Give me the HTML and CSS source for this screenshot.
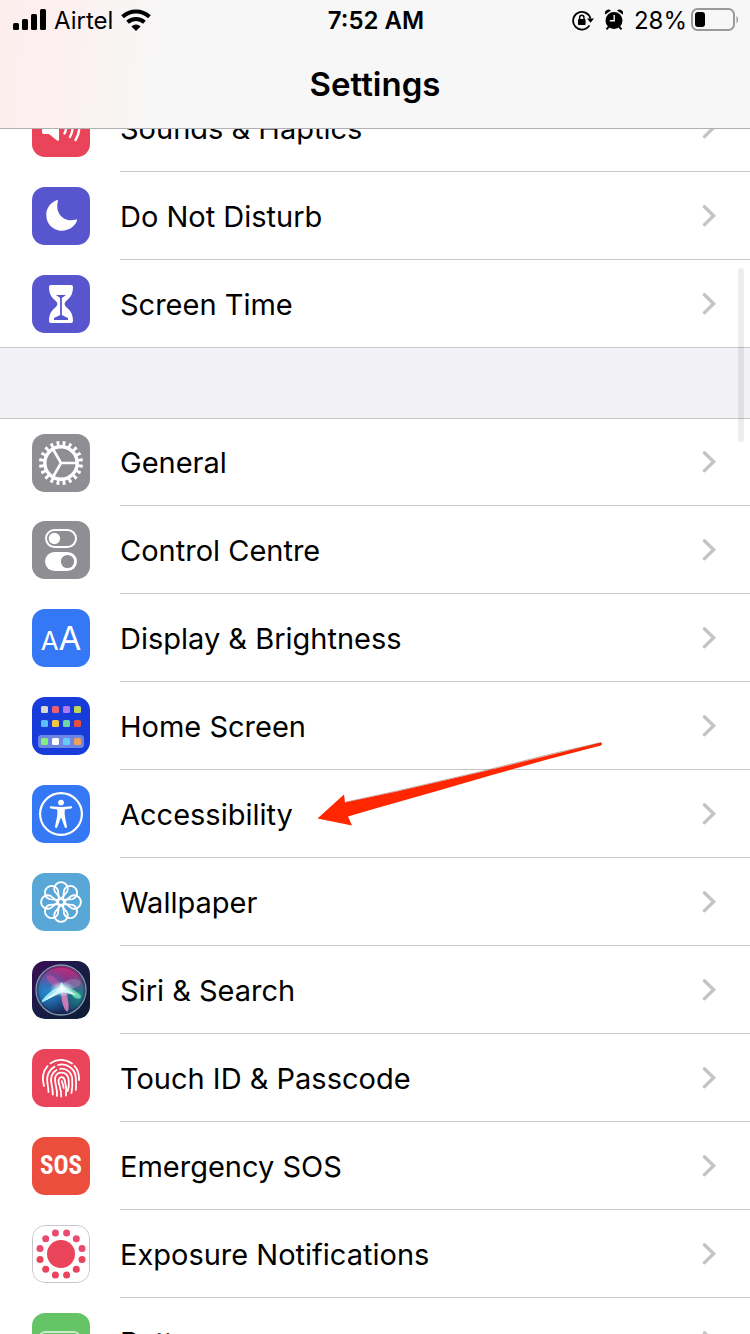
FILE: index.html
```html
<!DOCTYPE html>
<html lang="en">
<head>
    <meta charset="UTF-8">
    <meta name="viewport" content="width=device-width, initial-scale=1.0">
    <title>Settings</title>
    <link rel="stylesheet" href="styles.css">
</head>
<body>
    <!-- Shared shapes -->
    <svg class="defs" width="0" height="0" aria-hidden="true">
        <symbol id="chevron" viewBox="0 0 14 22">
            <path d="M2.5 1.8L11.6 10.7L2.5 19.6" fill="none" stroke="#c4c4c7" stroke-width="3.4" stroke-linecap="round" stroke-linejoin="miter"/>
        </symbol>
        <path id="petal" d="M29 26L23 18.8A6.7 6.7 0 1 1 35 18.8Z"/>
        <g id="dots">
            <circle cx="34.6" cy="8" r="3.5"/>
            <circle cx="44.3" cy="13.7" r="3.5"/>
            <circle cx="50" cy="23.4" r="3.5"/>
        </g>
    </svg>

    <div class="screen">
        <header class="header">
            <div class="status-bar">
                <div class="status-left">
                    <svg width="33" height="22" viewBox="0 0 33 22" aria-hidden="true">
                        <rect x="0" y="14" width="6" height="7" rx="1.5"/>
                        <rect x="9" y="10" width="6" height="11" rx="1.5"/>
                        <rect x="18" y="5" width="6" height="16" rx="1.5"/>
                        <rect x="27" y="0" width="6" height="21" rx="1.5"/>
                    </svg>
                    <span class="status-text">Airtel</span>
                    <svg width="30" height="22" viewBox="0 0 30 22" aria-hidden="true">
                        <g fill="none" stroke="#000" stroke-width="4">
                            <path d="M1.6 7.8A19.5 19.5 0 0 1 28.4 7.8"/>
                            <path d="M6.6 13.2A12.5 12.5 0 0 1 23.4 13.2"/>
                        </g>
                        <path d="M10.4 17.4A6.8 6.8 0 0 1 19.6 17.4L15 22Z"/>
                    </svg>
                </div>
                <div class="status-text status-time">7:52 AM</div>
                <div class="status-right">
                    <svg width="22" height="22" viewBox="0 0 22 22" aria-hidden="true">
                        <path d="M17.4 16.4A8.8 8.8 0 1 1 18.4 9.5" fill="none" stroke="#000" stroke-width="1.8"/>
                        <path d="M15 9.5H22L18.5 13.8Z"/>
                        <rect x="6" y="10" width="7.600" height="6" rx="0.800"/>
                        <path d="M7.600 10.500V8.800A2.200 2.600 0 0 1 12 8.800V10.500" fill="none" stroke="#000" stroke-width="1.400"/>
                    </svg>
                    <svg width="18" height="22" viewBox="0 0 18 22" aria-hidden="true">
                        <circle cx="9" cy="11.500" r="8.500"/>
                        <path d="M0.300 5.500A3.500 3.500 0 0 1 6 1.600ZM17.700 5.500A3.500 3.500 0 0 0 12 1.600Z"/>
                        <path d="M4 17.500L1.500 20.300M14 17.500L16.500 20.300" stroke="#000" stroke-width="2"/>
                        <path d="M9.200 6V11.800H4.800" fill="none" stroke="#f7f7f7" stroke-width="1.400"/>
                    </svg>
                    <span class="status-text">28%</span>
                    <svg class="battery" width="48" height="24" viewBox="0 0 48 24" aria-hidden="true">
                        <rect x="1" y="1" width="42" height="21" rx="5.500" fill="none" stroke="#999" stroke-width="2"/>
                        <rect x="4" y="4" width="10" height="15" rx="3"/>
                        <path d="M45.500 7.500Q48.500 11.500 45.500 15.500Z" fill="#999"/>
                    </svg>
                </div>
            </div>
            <h1 class="title">Settings</h1>
        </header>

        <main class="content">
            <ul class="group group-first">
                <li>
                    <a class="row" href="#">
                        <svg class="icon red" viewBox="0 0 58 58" aria-hidden="true">
                            <path d="M12 22h5l8-6.500q2-1.300 2 1v24q0 2-2 1L17 35h-5q-2 0-2-2v-9q0-2 2-2z" fill="#fff"/>
                            <g fill="none" stroke="#fff" stroke-width="2.400" stroke-linecap="round">
                                <path d="M32.500 23.500Q35.500 29 32.500 34.500"/>
                                <path d="M38 20Q43 29 38 38"/>
                                <path d="M43.500 17Q51 29 43.500 41"/>
                            </g>
                        </svg>
                        <span class="row-body">
                            <span class="label">Sounds &amp; Haptics</span>
                            <svg class="chevron" aria-hidden="true"><use href="#chevron"/></svg>
                        </span>
                    </a>
                </li>
                <li>
                    <a class="row" href="#">
                        <svg class="icon purple" viewBox="0 0 58 58" aria-hidden="true">
                            <path d="M24.500 13.200C17.500 16 14.300 22 14.300 28C14.300 37 21 43.700 30 43.700C37 43.700 43 39.500 45 33.600C45.300 32.700 44.800 32.300 44 32.600C33 35.500 22.600 28 25.900 14C26 13.200 25.300 12.900 24.500 13.200Z" fill="#fff"/>
                        </svg>
                        <span class="row-body">
                            <span class="label">Do Not Disturb</span>
                            <svg class="chevron" aria-hidden="true"><use href="#chevron"/></svg>
                        </span>
                    </a>
                </li>
                <li>
                    <a class="row" href="#">
                        <svg class="icon purple" viewBox="0 0 58 58" aria-hidden="true">
                            <path d="M19 10H39Q41 10 41 12C41 22 36 23.500 33 27.500Q32.200 29 33 30.500C36 34.500 41 36 41 46Q41 48 39 48H19Q17 48 17 46C17 36 22 34.500 25 30.500Q25.800 29 25 27.500C22 23.500 17 22 17 12Q17 10 19 10Z" fill="#fff"/>
                            <path d="M24 20H34L29.900 23V40L36 43V45H22V43L28.100 40V23Z" fill="#5856ce"/>
                        </svg>
                        <span class="row-body">
                            <span class="label">Screen Time</span>
                            <svg class="chevron" aria-hidden="true"><use href="#chevron"/></svg>
                        </span>
                    </a>
                </li>
            </ul>

            <ul class="group">
                <li>
                    <a class="row" href="#">
                        <svg class="icon gray" viewBox="0 0 58 58" aria-hidden="true">
                            <g fill="none" stroke="#fff">
                                <circle cx="29" cy="29" r="16.200" stroke-width="3.400"/>
                                <circle cx="29" cy="29" r="19.500" stroke-width="5" pathLength="200" stroke-dasharray="4.600 5.400" stroke-dashoffset="-2.700"/>
                                <path d="M29 29H44M29 29L21.500 16M29 29L21.500 42" stroke-width="2.600"/>
                            </g>
                        </svg>
                        <span class="row-body">
                            <span class="label">General</span>
                            <svg class="chevron" aria-hidden="true"><use href="#chevron"/></svg>
                        </span>
                    </a>
                </li>
                <li>
                    <a class="row" href="#">
                        <svg class="icon gray" viewBox="0 0 58 58" aria-hidden="true">
                            <rect x="14" y="9" width="30" height="17" rx="8.500" fill="none" stroke="#fff" stroke-width="2"/>
                            <circle cx="22.400" cy="17.500" r="5.700" fill="#fff"/>
                            <rect x="13" y="31" width="32" height="19" rx="9.500" fill="#fff"/>
                            <circle cx="35.500" cy="40.500" r="6.600" fill="#8e8e93"/>
                        </svg>
                        <span class="row-body">
                            <span class="label">Control Centre</span>
                            <svg class="chevron" aria-hidden="true"><use href="#chevron"/></svg>
                        </span>
                    </a>
                </li>
                <li>
                    <a class="row" href="#">
                        <span class="icon blue text-icon" aria-hidden="true"><span class="small-a">A</span><span class="big-a">A</span></span>
                        <span class="row-body">
                            <span class="label">Display &amp; Brightness</span>
                            <svg class="chevron" aria-hidden="true"><use href="#chevron"/></svg>
                        </span>
                    </a>
                </li>
                <li>
                    <a class="row" href="#">
                        <svg class="icon navy" viewBox="0 0 58 58" aria-hidden="true">
                            <rect x="6" y="38" width="46" height="13" rx="3.500" fill="#6d86e4"/>
                            <rect x="9" y="9" width="7" height="7" rx="1.500" fill="#d8d8d0"/>
                            <rect x="20" y="9" width="7" height="7" rx="1.500" fill="#ee5f6b"/>
                            <rect x="31" y="9" width="7" height="7" rx="1.500" fill="#ad7af2"/>
                            <rect x="42" y="9" width="7" height="7" rx="1.500" fill="#bcd751"/>
                            <rect x="9" y="23" width="7" height="7" rx="1.500" fill="#5abdf8"/>
                            <rect x="20" y="23" width="7" height="7" rx="1.500" fill="#f5c443"/>
                            <rect x="31" y="23" width="7" height="7" rx="1.500" fill="#6fd3a6"/>
                            <rect x="42" y="23" width="7" height="7" rx="1.500" fill="#e84d3d"/>
                            <rect x="9" y="41" width="7" height="7" rx="1.500" fill="#83ee7c"/>
                            <rect x="20" y="41" width="7" height="7" rx="1.500" fill="#fff"/>
                            <rect x="31" y="41" width="7" height="7" rx="1.500" fill="#62cbf8"/>
                            <rect x="42" y="41" width="7" height="7" rx="1.500" fill="#f0a05a"/>
                        </svg>
                        <span class="row-body">
                            <span class="label">Home Screen</span>
                            <svg class="chevron" aria-hidden="true"><use href="#chevron"/></svg>
                        </span>
                    </a>
                </li>
                <li class="pointed">
                    <a class="row" href="#">
                        <svg class="icon blue" viewBox="0 0 58 58" aria-hidden="true">
                            <circle cx="29" cy="29" r="20.900" fill="none" stroke="#fff" stroke-width="2.200"/>
                            <circle cx="29" cy="17.600" r="2.900" fill="#fff"/>
                            <path d="M19 21.200Q29 22.600 39 21.200Q40.300 21.200 40.200 22.400Q40.100 23.200 39 23.400L32.800 24.400Q32.300 28 33 32L35 41.500Q35 43 33.800 43Q33 43 32.600 42L29.600 33.500Q29 32.700 28.400 33.500L25.400 42Q25 43 24.200 43Q23 43 23 41.500L25 32Q25.700 28 25.200 24.400L19 23.400Q17.900 23.200 17.800 22.400Q17.700 21.200 19 21.200Z" fill="#fff"/>
                        </svg>
                        <span class="row-body">
                            <span class="label">Accessibility</span>
                            <svg class="chevron" aria-hidden="true"><use href="#chevron"/></svg>
                        </span>
                    </a>
                    <svg class="arrow" width="286" height="86" viewBox="0 0 286 86" aria-hidden="true">
                        <path d="M0.500 76.500L27 52.500L28 60.500L80 49.500L160 31L284 0.500Q286 2 284 3.500L232 17L175 33L120 49L60 66L31 74.500L35 83.500Z" fill="#ff2600"/>
                        <path d="M29 60L80 49L160 30.500L232 12.500L284 0.500" fill="none" stroke="#8a3a35" stroke-width="1" opacity="0.450"/>
                    </svg>
                </li>
                <li>
                    <a class="row" href="#">
                        <svg class="icon sky" viewBox="0 0 58 58" aria-hidden="true">
                            <g fill="none" stroke="#fff" stroke-width="1.800">
                                <use href="#petal"/>
                                <use href="#petal" transform="rotate(45 29 29)"/>
                                <use href="#petal" transform="rotate(90 29 29)"/>
                                <use href="#petal" transform="rotate(135 29 29)"/>
                                <use href="#petal" transform="rotate(180 29 29)"/>
                                <use href="#petal" transform="rotate(225 29 29)"/>
                                <use href="#petal" transform="rotate(270 29 29)"/>
                                <use href="#petal" transform="rotate(315 29 29)"/>
                                <circle cx="29" cy="29" r="3.200"/>
                            </g>
                        </svg>
                        <span class="row-body">
                            <span class="label">Wallpaper</span>
                            <svg class="chevron" aria-hidden="true"><use href="#chevron"/></svg>
                        </span>
                    </a>
                </li>
                <li>
                    <a class="row" href="#">
                        <svg class="icon" viewBox="0 0 58 58" aria-hidden="true">
                            <defs>
                                <linearGradient id="siriBack" x1="0" y1="0" x2="1" y2="1">
                                    <stop offset="0" stop-color="#3c0c55"/>
                                    <stop offset="0.450" stop-color="#1b1c48"/>
                                    <stop offset="1" stop-color="#0c1d33"/>
                                </linearGradient>
                                <linearGradient id="siriBall" x1="0.600" y1="0" x2="0.400" y2="1">
                                    <stop offset="0" stop-color="#c02c7c"/>
                                    <stop offset="0.400" stop-color="#6f3a8c"/>
                                    <stop offset="0.600" stop-color="#204c83"/>
                                    <stop offset="1" stop-color="#152451"/>
                                </linearGradient>
                                <radialGradient id="siriBlue" cx="0.200" cy="0.550" r="0.500">
                                    <stop offset="0" stop-color="#288fd8" stop-opacity="0.900"/>
                                    <stop offset="1" stop-color="#288fd8" stop-opacity="0"/>
                                </radialGradient>
                                <radialGradient id="siriTeal" cx="0.900" cy="0.600" r="0.450">
                                    <stop offset="0" stop-color="#1d8d86" stop-opacity="0.900"/>
                                    <stop offset="1" stop-color="#1d8d86" stop-opacity="0"/>
                                </radialGradient>
                                <radialGradient id="siriGlow">
                                    <stop offset="0" stop-color="#fff"/>
                                    <stop offset="0.350" stop-color="#d8fcff" stop-opacity="0.800"/>
                                    <stop offset="1" stop-color="#8fe8f0" stop-opacity="0"/>
                                </radialGradient>
                            </defs>
                            <rect width="58" height="58" fill="url(#siriBack)"/>
                            <circle cx="29" cy="29" r="24" fill="url(#siriBall)"/>
                            <circle cx="29" cy="29" r="24" fill="url(#siriBlue)"/>
                            <circle cx="29" cy="29" r="24" fill="url(#siriTeal)"/>
                            <path d="M14 16Q19 11 27 21L31 30Q19 26 14 16Z" fill="#d44fa0" opacity="0.550"/>
                            <path d="M27 25Q39 14 48 20Q51 24 43 27L31 30Z" fill="#b58ac7" opacity="0.400"/>
                            <path d="M31 26Q44 28 49 35Q49 39 43 37Z" fill="#73ebb4" opacity="0.800"/>
                            <path d="M28 28L34 30Q38 45 36 51Q32 50 30 40Z" fill="#e783be" opacity="0.850"/>
                            <path d="M32 26Q20 37 9 42Q10 37 22 28Z" fill="#a6f4ff" opacity="0.900"/>
                            <path d="M29 21Q31 23 33 27L45 34Q37 33 31 31L12 40L27 28Z" fill="#fff" opacity="0.850"/>
                            <ellipse cx="30" cy="28" rx="13" ry="8" fill="url(#siriGlow)"/>
                            <circle cx="29" cy="29" r="25" fill="none" stroke="#8199ad" stroke-width="1.300"/>
                            <circle cx="29" cy="29" r="23" fill="none" stroke="#202650" stroke-width="1" opacity="0.500"/>
                        </svg>
                        <span class="row-body">
                            <span class="label">Siri &amp; Search</span>
                            <svg class="chevron" aria-hidden="true"><use href="#chevron"/></svg>
                        </span>
                    </a>
                </li>
                <li>
                    <a class="row" href="#">
                        <svg class="icon red" viewBox="0 0 58 58" aria-hidden="true">
                            <g fill="none" stroke="#fff" stroke-width="1.800" stroke-linecap="round">
                                <path d="M12 37Q8.500 25 15.500 17.200"/>
                                <path d="M18.500 14.200Q29 7.500 40 14.500"/>
                                <path d="M42.500 17Q47.600 22.500 47 31"/>
                                <path d="M16.500 43C16.500 36 13 30 16.800 23.500Q18.800 19.700 22.500 17.600"/>
                                <path d="M26 16C35 13.500 43.500 20 43.800 29Q44.500 35 43.800 41"/>
                                <path d="M20.800 45.500C21 36 17.500 33 19.600 27Q21 23 24.500 21"/>
                                <path d="M28 19.800C34.500 19 39.800 23.500 40.200 30Q40.800 37 39.500 44"/>
                                <path d="M25 47C25.600 37 21.500 33.500 23.300 28C25.500 22 34.500 22 36.500 29.500Q37.500 37 35.600 42"/>
                                <path d="M29.200 47.500C29.700 39 25.500 34 26.700 30.500C28 27 31.700 27.500 32.700 31Q35 39 34 46.500"/>
                                <path d="M29.800 32Q31.300 36 31.600 39"/>
                            </g>
                        </svg>
                        <span class="row-body">
                            <span class="label">Touch ID &amp; Passcode</span>
                            <svg class="chevron" aria-hidden="true"><use href="#chevron"/></svg>
                        </span>
                    </a>
                </li>
                <li>
                    <a class="row" href="#">
                        <span class="icon orange text-icon sos" aria-hidden="true">SOS</span>
                        <span class="row-body">
                            <span class="label">Emergency SOS</span>
                            <svg class="chevron" aria-hidden="true"><use href="#chevron"/></svg>
                        </span>
                    </a>
                </li>
                <li>
                    <a class="row" href="#">
                        <svg class="icon" viewBox="0 0 58 58" aria-hidden="true">
                            <rect x="0.500" y="0.500" width="57" height="57" rx="12.500" fill="#fff" stroke="#c8c8ca"/>
                            <g fill="#ea445a">
                                <circle cx="29" cy="29" r="14"/>
                                <use href="#dots" fill="#e94b70"/>
                                <use href="#dots" transform="rotate(90 29 29)"/>
                                <use href="#dots" transform="rotate(180 29 29)"/>
                                <use href="#dots" transform="rotate(270 29 29)" fill="#e94b70"/>
                            </g>
                        </svg>
                        <span class="row-body">
                            <span class="label">Exposure Notifications</span>
                            <svg class="chevron" aria-hidden="true"><use href="#chevron"/></svg>
                        </span>
                    </a>
                </li>
                <li>
                    <a class="row" href="#">
                        <svg class="icon green" viewBox="0 0 58 58" aria-hidden="true">
                            <rect x="8" y="19" width="39" height="21" rx="5" fill="none" stroke="#c9ebc9" stroke-width="2"/>
                            <rect x="11" y="22" width="33" height="15" rx="2" fill="#fff"/>
                            <path d="M49 26Q52 29.500 49 33Z" fill="#fff"/>
                        </svg>
                        <span class="row-body">
                            <span class="label">Battery</span>
                            <svg class="chevron" aria-hidden="true"><use href="#chevron"/></svg>
                        </span>
                    </a>
                </li>
            </ul>
            <div class="scroll-thumb"></div>
        </main>
    </div>
</body>
</html>
```

FILE: styles.css
```css
* {
    margin: 0;
    padding: 0;
    box-sizing: border-box;
}

body {
    font-family: Inter, Roboto, "Liberation Sans", sans-serif;
    background: #f2f1f6;
    color: #000;
}

.defs {
    position: absolute;
}

.screen {
    display: flex;
    flex-direction: column;
    height: 100vh;
    overflow: hidden;
}

/* Header */
.header {
    flex: none;
    background: linear-gradient(95deg, #fdeeee 0, #fdeff0 60px, #f9f4f4 120px, #f7f7f7 180px);
    border-bottom: 1px solid #b0b0b2;
}

.status-bar {
    display: grid;
    grid-template-columns: 1fr auto 1fr;
    align-items: center;
    height: 40px;
    padding: 0 11px 0 13px;
}

.status-left,
.status-right {
    display: flex;
    align-items: center;
}

.status-left {
    gap: 8px;
}

.status-right {
    justify-content: flex-end;
    gap: 11px;
}

.status-right .battery {
    margin-left: -7px;
}

.status-text {
    padding-top: 2px;
    font-size: 24px;
    line-height: 38px;
}

.status-time {
    font-weight: 600;
}

.title {
    height: 88px;
    font-size: 33px;
    font-weight: 600;
    line-height: 88px;
    text-align: center;
}

/* List */
.content {
    position: relative;
    flex: 1;
    min-height: 0;
    overflow: hidden;
}

.group {
    list-style: none;
    background: #fff;
    border-top: 1px solid #c6c6c8;
    border-bottom: 1px solid #c6c6c8;
    margin-bottom: 70px;
}

/* scrolled part of the way under the header */
.group-first {
    margin-top: -46px;
}

.row {
    display: flex;
    align-items: center;
    gap: 30px;
    height: 88px;
    padding-left: 32px;
    color: inherit;
    text-decoration: none;
}

li:last-child .row,
.group:not(.group-first) li:first-child .row {
    height: 87px;
}

.row-body {
    display: flex;
    flex: 1;
    align-items: center;
    justify-content: space-between;
    height: 100%;
    padding-right: 34px;
    border-bottom: 1px solid #c6c6c8;
}

li:last-child .row-body {
    border-bottom: none;
}

.label {
    padding-top: 2px;
    font-size: 29px;
    line-height: 40px;
}

.chevron {
    width: 14px;
    height: 22px;
}

/* Icons */
.icon {
    flex: none;
    width: 58px;
    height: 58px;
    border-radius: 13px;
}

.red {
    background: #ea445a;
}

.purple {
    background: #5856ce;
}

.gray {
    background: #8e8e93;
}

.blue {
    background: #3478f6;
}

.navy {
    background: #183cda;
}

.sky {
    background: #59a7d7;
}

.orange {
    background: #eb4e3d;
}

.green {
    background: #65c466;
}

.text-icon {
    display: flex;
    align-items: baseline;
    justify-content: center;
    color: #fff;
    line-height: 58px;
}

.small-a {
    font-size: 26px;
}

.big-a {
    font-size: 33px;
}

.sos {
    font-family: "Liberation Sans Narrow", "Roboto Condensed", Roboto, sans-serif;
    font-size: 25px;
    font-weight: bold;
}

/* Overlays */
.pointed {
    position: relative;
}

.arrow {
    position: absolute;
    top: -28px;
    left: 317px;
    pointer-events: none;
}

.scroll-thumb {
    position: absolute;
    top: 139px;
    right: 6px;
    width: 6px;
    height: 174px;
    border-radius: 3px;
    background: rgba(0, 0, 0, 0.07);
}
```
